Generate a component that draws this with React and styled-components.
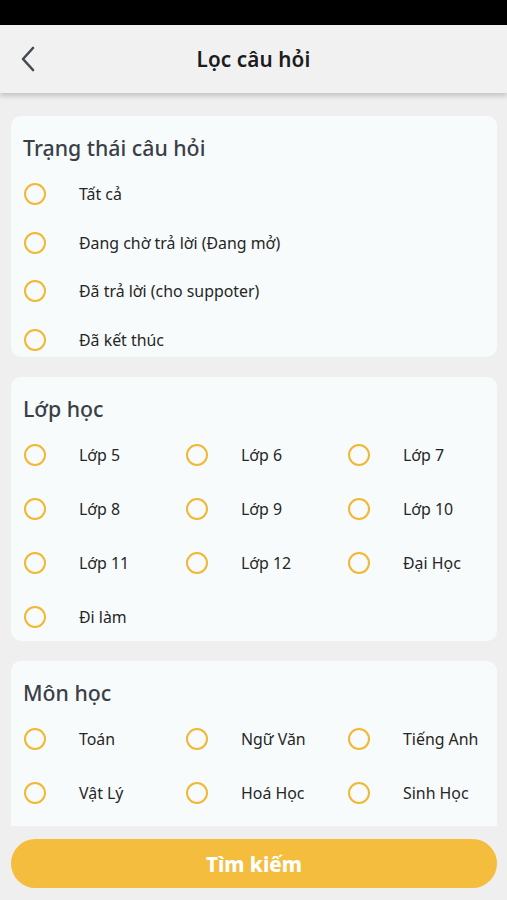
import React from "react";
import styled, { createGlobalStyle } from "styled-components";

const Global = createGlobalStyle`
  html, body { margin: 0; padding: 0; background: #efefef; }
  body { font-family: "Noto Sans", "Open Sans", sans-serif; }
  * { box-sizing: border-box; }
`;

const Screen = styled.div`
  width: 507px;
  height: 900px;
  display: flex;
  flex-direction: column;
  background: #efefef;
  overflow: hidden;
`;

const StatusBar = styled.div`
  height: 25px;
  background: #000;
  flex-shrink: 0;
`;

const Header = styled.header`
  height: 68px;
  flex-shrink: 0;
  display: flex;
  align-items: center;
  justify-content: center;
  background: #f1f1f1;
  box-shadow: 0 3px 5px rgba(0, 0, 0, 0.18);
  position: relative;
  z-index: 2;
`;

const BackButton = styled.button`
  position: absolute;
  left: 14px;
  top: 50%;
  transform: translateY(-50%);
  width: 28px;
  height: 34px;
  border: none;
  background: transparent;
  padding: 0;
  display: flex;
  align-items: center;
  justify-content: center;
`;

const Title = styled.h1`
  margin: 0;
  font-family: "Noto Sans", sans-serif;
  font-size: 20.7px;
  font-weight: 600;
  color: #1c1c1c;
  letter-spacing: 0.1px;
`;

const Scroll = styled.main`
  flex: 1;
  overflow: hidden;
  padding: 23px 10px 0 11px;
  display: flex;
  flex-direction: column;
  gap: 20px;
`;

const Card = styled.section`
  background: #f7fbfc;
  border-radius: 10px;
  padding: 18px 12px ${(p) => p.$pb || 0}px;
  flex-shrink: 0;
`;

const CardTitle = styled.h2`
  margin: 0;
  height: 28px;
  line-height: 28px;
  font-size: 21.3px;
  font-weight: 500;
  color: #3a3f48;
`;

const List = styled.div`
  margin-top: 15px;
  display: flex;
  flex-direction: column;
  gap: 14.5px;
`;

const Grid = styled.div`
  margin-top: 15px;
  display: grid;
  grid-template-columns: repeat(3, 162px);
  row-gap: 20px;
`;

const Option = styled.label`
  height: 34px;
  display: flex;
  align-items: center;
  gap: 33px;
  padding-left: 1px;
  font-size: 15.9px;
  color: #262626;
  white-space: nowrap;
`;

const Radio = styled.span`
  width: 22px;
  height: 22px;
  border-radius: 50%;
  border: 2.5px solid #f2b733;
  flex-shrink: 0;
`;

const Footer = styled.footer`
  flex-shrink: 0;
  padding: 13px 10px 12px 11px;
`;

const SearchButton = styled.button`
  width: 100%;
  height: 49px;
  border: none;
  border-radius: 25px;
  background: #f4bd3e;
  color: #fff;
  font-family: "Noto Sans", sans-serif;
  font-size: 20.5px;
  font-weight: 800;
`;

const statuses = [
  "Tất cả",
  "Đang chờ trả lời (Đang mở)",
  "Đã trả lời (cho suppoter)",
  "Đã kết thúc",
];
const grades = ["Lớp 5", "Lớp 6", "Lớp 7", "Lớp 8", "Lớp 9", "Lớp 10", "Lớp 11", "Lớp 12", "Đại Học", "Đi làm"];
const subjects = ["Toán", "Ngữ Văn", "Tiếng Anh", "Vật Lý", "Hoá Học", "Sinh Học"];

const Opt = ({ text }) => (
  <Option>
    <Radio />
    <span>{text}</span>
  </Option>
);

export default function App() {
  return (
    <>
      <Global />
      <Screen>
        <StatusBar />
        <Header>
          <BackButton aria-label="back">
            <svg width="16" height="26" viewBox="0 0 16 26" fill="none">
              <path d="M13 2 L3 13 L13 24" stroke="#454a52" strokeWidth="2.6" strokeLinecap="round" strokeLinejoin="round" />
            </svg>
          </BackButton>
          <Title>Lọc câu hỏi</Title>
        </Header>
        <Scroll>
          <Card>
            <CardTitle>Trạng thái câu hỏi</CardTitle>
            <List>
              {statuses.map((s) => (
                <Opt key={s} text={s} />
              ))}
            </List>
          </Card>
          <Card $pb={7}>
            <CardTitle>Lớp học</CardTitle>
            <Grid>
              {grades.map((s) => (
                <Opt key={s} text={s} />
              ))}
            </Grid>
          </Card>
          <Card $pb={30}>
            <CardTitle>Môn học</CardTitle>
            <Grid>
              {subjects.map((s) => (
                <Opt key={s} text={s} />
              ))}
            </Grid>
          </Card>
        </Scroll>
        <Footer>
          <SearchButton>Tìm kiếm</SearchButton>
        </Footer>
      </Screen>
    </>
  );
}
